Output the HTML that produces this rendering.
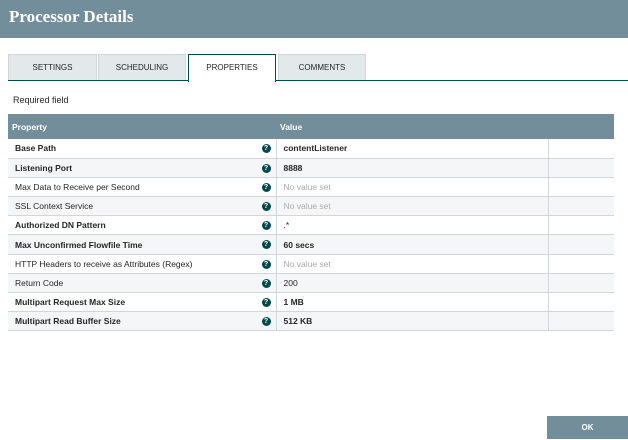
<!DOCTYPE html><html><head><style>
*{margin:0;padding:0;box-sizing:border-box}
body{width:628px;height:439px;background:#fff;font-family:"Liberation Sans",sans-serif;position:relative;overflow:hidden}
.hd{position:absolute;left:0;top:0;width:628px;height:38px;background:#728e9b;color:#fff;font-family:"Liberation Serif",serif;font-weight:bold;font-size:17px;padding:7px 0 0 9px}
.tab{position:absolute;top:54px;height:26px;background:#e3e8eb;border:1px solid #cfd7db;border-bottom:none;font-size:8px;color:#262626;text-align:center;line-height:25px}
.tab.a{background:#fff;border:1px solid #004849;border-bottom:none;height:28px;z-index:2}
.line{position:absolute;left:8px;top:80px;width:620px;height:1px;background:#004849}
.req{position:absolute;left:13px;top:95px;font-size:9px;color:#262626}
table{position:absolute;left:8px;top:114px;width:606px;border-collapse:collapse;font-size:8.5px;color:#262626}
th{background:#728e9b;color:#fff;text-align:left;height:25px;font-size:8.5px;padding-left:4px}
td{height:19.2px;border-bottom:1px solid #cfd7db;padding-left:7px}
tr:nth-child(odd) td{background:#f4f6f7}
td.p{width:268px;position:relative}
td.v{width:272px;border-left:1px solid #cfd7db;border-right:1px solid #cfd7db}
.b{font-weight:bold}
.n{color:#aaa}
.q{position:absolute;right:5px;top:5px;width:9px;height:9px;border-radius:50%;background:#004849;color:#fff;font-size:7px;font-weight:bold;line-height:9px;text-align:center}
.ok{position:absolute;left:547px;top:416px;width:81px;height:23px;background:#728e9b;color:#fff;font-size:8px;font-weight:bold;text-align:center;line-height:24px}
</style></head><body>
<div class="hd">Processor Details</div>
<div class="tab" style="left:8px;width:89px">SETTINGS</div>
<div class="tab" style="left:98px;width:88px">SCHEDULING</div>
<div class="tab a" style="left:188px;width:88px">PROPERTIES</div>
<div class="tab" style="left:278px;width:88px">COMMENTS</div>
<div class="line"></div>
<div class="req">Required field</div>
<table>
<tr><th>Property</th><th>Value</th><th></th></tr>
<tr><td class="p b">Base Path<span class="q">?</span></td><td class="v b">contentListener</td><td></td></tr>
<tr><td class="p b">Listening Port<span class="q">?</span></td><td class="v b">8888</td><td></td></tr>
<tr><td class="p">Max Data to Receive per Second<span class="q">?</span></td><td class="v n">No value set</td><td></td></tr>
<tr><td class="p">SSL Context Service<span class="q">?</span></td><td class="v n">No value set</td><td></td></tr>
<tr><td class="p b">Authorized DN Pattern<span class="q">?</span></td><td class="v">.*</td><td></td></tr>
<tr><td class="p b">Max Unconfirmed Flowfile Time<span class="q">?</span></td><td class="v b">60 secs</td><td></td></tr>
<tr><td class="p">HTTP Headers to receive as Attributes (Regex)<span class="q">?</span></td><td class="v n">No value set</td><td></td></tr>
<tr><td class="p">Return Code<span class="q">?</span></td><td class="v">200</td><td></td></tr>
<tr><td class="p b">Multipart Request Max Size<span class="q">?</span></td><td class="v b">1 MB</td><td></td></tr>
<tr><td class="p b">Multipart Read Buffer Size<span class="q">?</span></td><td class="v b">512 KB</td><td></td></tr>
</table>
<div class="ok">OK</div>
</body></html>
